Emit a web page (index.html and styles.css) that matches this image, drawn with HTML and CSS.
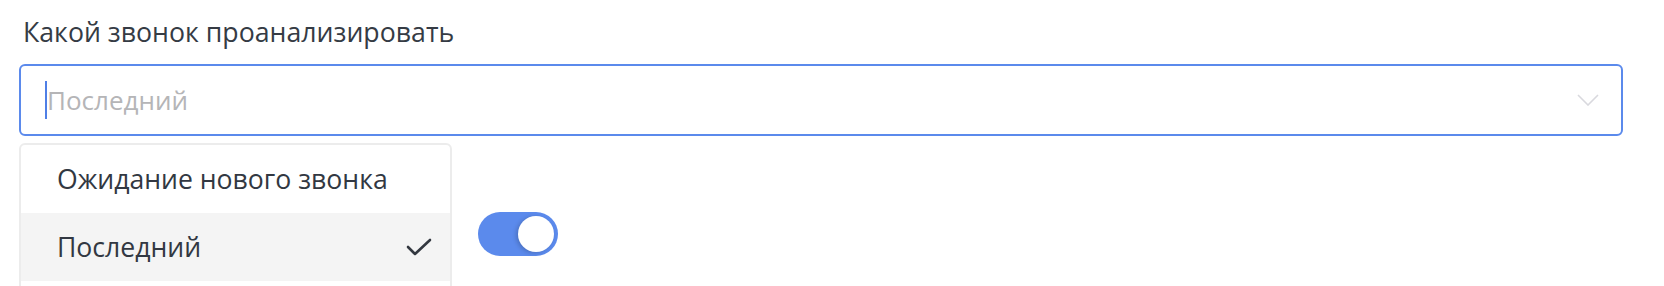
FILE: index.html
```html
<!DOCTYPE html>
<html lang="ru">
<head>
<meta charset="utf-8">
<link rel="stylesheet" href="styles.css">
</head>
<body>
<div class="page">
  <div class="field">
    <div class="label">Какой звонок проанализировать</div>
    <div class="select">
      <span class="caret"></span>
      <span class="placeholder">Последний</span>
      <svg class="chevron" width="22" height="12" viewBox="0 0 22 12"><path d="M1 1 L11 11 L21 1" fill="none" stroke="#d9d9de" stroke-width="1.6"/></svg>
    </div>
  </div>
  <div class="row">
    <div class="toggle"><span class="knob"></span></div>
  </div>
  <ul class="menu">
    <li class="item">Ожидание нового звонка</li>
    <li class="item selected">Последний
      <svg class="check" width="26" height="18" viewBox="0 0 26 18"><path d="M2 9 L9 16 L24 2" fill="none" stroke="#333840" stroke-width="2.6" stroke-linecap="round" stroke-linejoin="round"/></svg>
    </li>
    <li class="item"></li>
  </ul>
</div>
</body>
</html>
```

FILE: styles.css
```css
html, body {
  margin: 0;
  padding: 0;
  background: #ffffff;
}
.page {
  position: relative;
  width: 1664px;
  height: 286px;
  overflow: hidden;
  font-family: "Open Sans", "Noto Sans", sans-serif;
  color: #323842;
}
.field {
  padding: 12px 41px 0 19px;
}
.label {
  font-size: 26.7px;
  line-height: 40px;
  padding-left: 4px;
  margin-bottom: 12px;
  color: #353b44;
}
.select {
  box-sizing: border-box;
  height: 72px;
  border: 2px solid #5b8aec;
  border-radius: 6px;
  display: flex;
  align-items: center;
  padding-left: 24px;
  padding-right: 22px;
}
.caret {
  width: 2px;
  height: 38px;
  background: #4f7fe6;
}
.placeholder {
  font-size: 26px;
  color: #b5b5b7;
  flex: 1;
}
.chevron {
  display: block;
}
.row {
  padding-left: 478px;
  padding-top: 76px;
}
.toggle {
  box-sizing: border-box;
  width: 80px;
  height: 44px;
  border-radius: 22px;
  background: #5b8aec;
  padding: 4px;
  display: flex;
  justify-content: flex-end;
}
.knob {
  width: 36px;
  height: 36px;
  border-radius: 50%;
  background: #ffffff;
  box-shadow: -2px 1px 4px rgba(0, 0, 0, 0.18);
}
.menu {
  position: absolute;
  left: 19px;
  top: 143px;
  width: 433px;
  box-sizing: border-box;
  margin: 0;
  padding: 0;
  list-style: none;
  background: #ffffff;
  border: 2px solid #ececec;
  border-radius: 6px;
}
.item {
  height: 68px;
  display: flex;
  align-items: center;
  justify-content: space-between;
  padding: 0 18px 0 36px;
  font-size: 26.6px;
  color: #323842;
}
.item.selected {
  background: #f4f4f4;
}
```
